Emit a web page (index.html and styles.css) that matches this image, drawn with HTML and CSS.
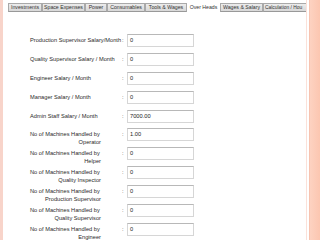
FILE: index.html
```html
<!DOCTYPE html>
<html lang="en">

<head>
  <meta charset="UTF-8">
  <meta name="viewport" content="width=device-width, initial-scale=1.0">
  <title>Over Heads</title>
  <link rel="stylesheet" href="styles.css">
</head>

<body>
  <div class="page">
    <div class="edge-left"></div>

    <div class="main">
      <ul class="tabs">
        <li class="tab tab-invest">Investments</li>
        <li class="tab tab-space">Space Expenses</li>
        <li class="tab tab-power">Power</li>
        <li class="tab tab-consum">Consumables</li>
        <li class="tab tab-tools">Tools &amp; Wages</li>
        <li class="tab tab-over active">Over Heads</li>
        <li class="tab tab-wages">Wages &amp; Salary</li>
        <li class="tab last">Calculation / Hou</li>
      </ul>

      <div class="form">
        <div class="label">Production Supervisor Salary/Month</div>
        <div class="colon">:</div>
        <div class="field">0</div>

        <div class="label">Quality Supervisor Salary / Month</div>
        <div class="colon">:</div>
        <div class="field">0</div>

        <div class="label">Engineer Salary / Month</div>
        <div class="colon">:</div>
        <div class="field">0</div>

        <div class="label">Manager Salary / Month</div>
        <div class="colon">:</div>
        <div class="field">0</div>

        <div class="label">Admin Staff Salary / Month</div>
        <div class="colon">:</div>
        <div class="field">7000.00</div>

        <div class="label two">No of Machines Handled by<span class="sub">Operator</span></div>
        <div class="colon">:</div>
        <div class="field">1.00</div>

        <div class="label two">No of Machines Handled by<span class="sub">Helper</span></div>
        <div class="colon">:</div>
        <div class="field">0</div>

        <div class="label two">No of Machines Handled by<span class="sub">Quality Inspector</span></div>
        <div class="colon">:</div>
        <div class="field">0</div>

        <div class="label two">No of Machines Handled by<span class="sub">Production Supervisor</span></div>
        <div class="colon">:</div>
        <div class="field">0</div>

        <div class="label two">No of Machines Handled by<span class="sub">Quality Supervisor</span></div>
        <div class="colon">:</div>
        <div class="field">0</div>

        <div class="label two">No of Machines Handled by<span class="sub">Engineer</span></div>
        <div class="colon">:</div>
        <div class="field">0</div>
      </div>
    </div>

    <div class="edge-right">
      <div class="line-a"></div>
      <div class="line-b"></div>
      <div class="band"></div>
    </div>
  </div>
</body>

</html>
```

FILE: styles.css
```css
body {
  margin: 0;
  background: #fff;
  font-family: 'Liberation Sans', Arial, sans-serif;
  color: #333;
}

.page {
  display: flex;
  width: 320px;
  height: 240px;
  overflow: hidden;
}

.edge-left {
  width: 3px;
  background: #f8d4ca;
}

.main {
  width: 303px;
  overflow: hidden;
}

/* tab strip */
.tabs {
  display: flex;
  list-style: none;
  margin: 3px 0 0 5px;
  padding: 0;
  white-space: nowrap;
}

.tab {
  height: 7px;
  line-height: 7px;
  font-size: 5.2px;
  text-align: center;
  overflow: hidden;
  color: #333;
  background: linear-gradient(#ececec, #d8d8d8);
  border: 1px solid #a9a9a9;
  border-bottom-color: #999;
}

.tab-invest { width: 32px; }
.tab-space { width: 41px; }
.tab-power { width: 20px; }
.tab-consum { width: 36px; }
.tab-tools { width: 40px; }
.tab-over { width: 31px; }
.tab-wages { width: 41px; }

.tab.active {
  background: #fff;
  border-color: #fff;
}

.tab.last {
  flex: 1;
  padding-left: 1px;
  text-align: left;
  font-size: 4.9px;
  border-right: 0;
}

/* form rows */
.form {
  display: grid;
  grid-template-columns: 92px 5px 67px;
  grid-auto-rows: 18.9px;
  margin: 18.5px 0 0 27px;
  font-size: 5.7px;
}

.label {
  margin-top: 5.5px;
  line-height: 8px;
  white-space: nowrap;
  color: #2a2a2a;
}

.label.two {
  width: 71px;
}

.sub {
  display: block;
  text-align: right;
}

.colon {
  margin-top: 5.5px;
  line-height: 8px;
  color: #2a2a2a;
}

.field {
  margin-top: 3.5px;
  height: 11px;
  line-height: 11px;
  padding-left: 2px;
  border: 1px solid #d6d6d6;
  border-top-color: #b8b8b8;
  color: #222;
}

/* right decoration */
.edge-right {
  display: flex;
  flex: 1;
}

.line-a {
  width: 1px;
  background: #fbe1d9;
}

.line-b {
  width: 2px;
  background: #fff;
}

.band {
  flex: 1;
  background: linear-gradient(90deg, #f7c3b0 0, #f7c3b0 1px, #fdd2c1 1px, #fcc6b0 100%);
}
```
